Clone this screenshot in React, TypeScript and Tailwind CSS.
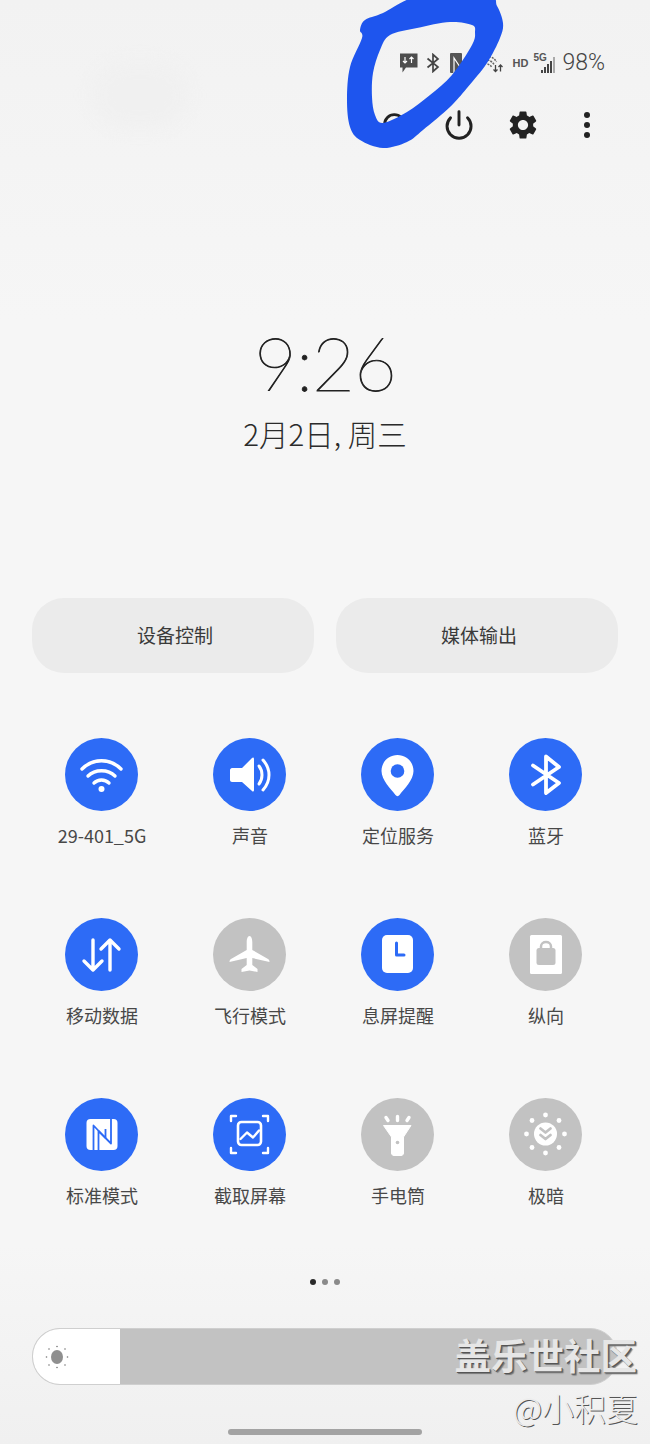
import React from "react";
import { Search, Power } from "lucide-react";
import { MdSettings } from "react-icons/md";

const BLUE = "#2d6bf6";
const GREY = "#c2c2c2";

function Glyph({ name, c }: { name: string; c: string }) {
  const s = { fill: "none", stroke: "#fff", strokeLinecap: "round" as const, strokeLinejoin: "round" as const };
  switch (name) {
    case "wifi":
      return (
        <g {...s} strokeWidth={3.4}>
          <path d="M17 31C28 20 45 20 56 31" />
          <path d="M23 38C30 31 43 31 50 38" />
          <path d="M29 45C33 41 40 41 44 45" />
          <circle cx={36.5} cy={51} r={3} fill="#fff" stroke="none" />
        </g>
      );
    case "sound":
      return (
        <g>
          <path d="M19 30H29L39 20C40 19 41 19.500 41 21V52C41 53.500 40 54 39 53L29 44H19C18 44 17 43 17 42V32C17 31 18 30 19 30Z" fill="#fff" />
          <path d="M46 28C50 33 50 41 46 46" {...s} strokeWidth={3} />
          <path d="M50 22C58 31 58 43 50 52" {...s} strokeWidth={3} />
        </g>
      );
    case "pin":
      return (
        <g>
          <path d="M36.500 17C45.500 17 52.500 24 52.500 33C52.500 42 43 51 38.500 57C37.500 58.500 35.500 58.500 34.500 57C30 51 20.500 42 20.500 33C20.500 24 27.500 17 36.500 17Z" fill="#fff" />
          <circle cx={36.500} cy={33} r={6.800} fill={c} />
        </g>
      );
    case "bt":
      return <path d="M24 27.500L50 45L37 55V18.500L50 29L24 46.500" {...s} strokeWidth={3.800} />;
    case "data":
      return (
        <g {...s} strokeWidth={3.400}>
          <path d="M28 22V52M19 43L28 52L37 43" />
          <path d="M45 52V22M36 31L45 22L54 31" />
        </g>
      );
    case "plane":
      return (
        <path
          d="M36.500 18C38.300 18 39.300 21 39.300 24V32L55 41C56 41.600 56.500 42.500 56.500 44L39.300 40V47L44.500 51V54L36.500 52.500L28.500 54V51L33.700 47V40L16.500 44C16.500 42.500 17 41.600 18 41L33.700 32V24C33.700 21 34.700 18 36.500 18Z"
          fill="#fff"
        />
      );
    case "aod":
      return (
        <g>
          <rect x={21} y={17} width={31} height={38} rx={5} fill="#fff" />
          <path d="M35.500 25V37H43" fill="none" stroke={c} strokeWidth={3} strokeLinecap="round" strokeLinejoin="round" />
        </g>
      );
    case "lock":
      return (
        <g>
          <rect x={21} y={17} width={32} height={39} rx={1.500} fill="#fff" />
          <rect x={27.500} y={30} width={19} height={17} rx={2.500} fill={c} />
          <path d="M32 31V28.500C32 22.500 42 22.500 42 28.500V31" fill="none" stroke={c} strokeWidth={2.500} />
        </g>
      );
    case "nfc":
      return (
        <g>
          <rect x={21.500} y={21} width={31} height={31} rx={4} fill="#fff" />
          <path d="M28.500 52V27.500L40.500 40V31" fill="none" stroke={c} strokeWidth={1.800} strokeLinejoin="round" />
          <path d="M46 21V45.500L33.500 33V52" fill="none" stroke={c} strokeWidth={1.800} strokeLinejoin="round" />
        </g>
      );
    case "shot":
      return (
        <g {...s} strokeWidth={2.400}>
          <path d="M18 23V18H23M50 18H55V23M18 50V55H23M50 55H55V50" />
          <rect x={25} y={24} width={23} height={23} rx={3.500} strokeWidth={2.600} />
          <path d="M27.500 41L34 34.500L40 39.500L46 32.500" />
        </g>
      );
    case "torch":
      return (
        <g>
          <path d="M22.500 27.500H50L42.500 39V55C42.500 56.500 41.500 57.500 40 57.500H33C31.500 57.500 30.500 56.500 30.500 55V39Z" fill="#fff" stroke="#fff" strokeLinejoin="round" strokeWidth={1} />
          <circle cx={36.500} cy={44.500} r={1.800} fill={c} />
          <path d="M25 19.500L27 22.500M36.500 18.500V22.500M48 19.500L46 22.500" {...s} strokeWidth={3.400} />
        </g>
      );
    case "dim":
      return (
        <g>
          <circle cx={36.500} cy={36} r={11.500} fill="#fff" />
          <path d="M31.500 30.500L36.500 34.500L41.500 30.500M31.500 37L36.500 41L41.500 37" fill="none" stroke={c} strokeWidth={2.800} strokeLinecap="round" strokeLinejoin="round" />
          {[[36.500, 17], [36.500, 55], [17.500, 36], [55.500, 36], [23, 22.500], [50, 22.500], [23, 49.500], [50, 49.500]].map(([x, y], i) => (
            <circle key={i} cx={x} cy={y} r={2.400} fill="#fff" />
          ))}
        </g>
      );
    default:
      return null;
  }
}

const tiles: { label: string; icon: string; on: boolean }[] = [
  { label: "29-401_5G", icon: "wifi", on: true },
  { label: "声音", icon: "sound", on: true },
  { label: "定位服务", icon: "pin", on: true },
  { label: "蓝牙", icon: "bt", on: true },
  { label: "移动数据", icon: "data", on: true },
  { label: "飞行模式", icon: "plane", on: false },
  { label: "息屏提醒", icon: "aod", on: true },
  { label: "纵向", icon: "lock", on: false },
  { label: "标准模式", icon: "nfc", on: true },
  { label: "截取屏幕", icon: "shot", on: true },
  { label: "手电筒", icon: "torch", on: false },
  { label: "极暗", icon: "dim", on: false },
];

function Tile({ label, icon, on }: { label: string; icon: string; on: boolean }) {
  const c = on ? BLUE : GREY;
  return (
    <div className="flex h-[180px] flex-col items-center">
      <svg width={73} height={73} viewBox="0 0 73 73" className="block shrink-0">
        <circle cx={36.500} cy={36.500} r={36.500} fill={c} />
        <Glyph name={icon} c={c} />
      </svg>
      <div className="mt-[11px] pl-[2px] text-[18px] leading-[26px] text-[#484848] whitespace-nowrap">{label}</div>
    </div>
  );
}

function StatusBar() {
  return (
    <div className="mt-[50px] flex h-[26px] shrink-0 items-center justify-end pr-[45px] text-[#555]">
      <svg width={19} height={20} viewBox="0 0 19 20" className="mr-[8px] block">
        <path d="M1 0.500H18.500V14.500H7L3.500 19.500V14.500H1Z" fill="#4d4d4d" />
        <path d="M6 4V10M4 8L6 10L8 8M12.500 10V4M10.500 6L12.500 4L14.500 6" fill="none" stroke="#fff" strokeWidth={1.200} />
      </svg>
      <svg width={14} height={20} viewBox="0 0 14 20" className="mr-[10px] block">
        <path d="M1.500 5.500L12 14L7 18.500V1.500L12 6L1.500 14.500" fill="none" stroke="#444" strokeWidth={1.700} />
      </svg>
      <svg width={12} height={20} viewBox="0 0 12 20" className="mr-[24px] block">
        <rect width={12} height={20} rx={1} fill="#555" />
        <path d="M4 20V5L10 14" fill="none" stroke="#fff" strokeWidth={1.200} />
      </svg>
      <svg width={17} height={19} viewBox="0 0 17 19" className="mr-[10px] block">
        <path d="M3 2.500C6 3 9 5 10.500 8M1.500 6C4 6.500 6.500 8 8 10.500M1.500 10C3 10.500 5 11.500 6 13.500" fill="none" stroke="#666" strokeWidth={1.500} strokeDasharray="2 1" />
        <path d="M9.500 11V17.500M7.500 15.500L9.500 17.500L11.500 15.500M14.500 17.500V11M12.500 13L14.500 11L16.500 13" fill="none" stroke="#444" strokeWidth={1.300} />
      </svg>
      <span className="mr-[5px] text-[11px] leading-none font-bold [font-family:'Liberation_Sans',sans-serif]">HD</span>
      <div className="relative mr-[7px] h-[20px] w-[22px]">
        <span className="absolute top-[0px] left-0 text-[10px] leading-[10px] font-bold [font-family:'Liberation_Sans',sans-serif]">5G</span>
        <div className="absolute right-0 bottom-0 flex items-end gap-[1px]">
          <div className="h-[3px] w-[2px] bg-[#444]" />
          <div className="h-[6px] w-[2px] bg-[#444]" />
          <div className="h-[9px] w-[2px] bg-[#444]" />
          <div className="h-[12px] w-[2px] bg-[#444]" />
          <div className="h-[16px] w-[2px] bg-[#aaa]" />
        </div>
      </div>
      <span className="text-[23px] leading-[26px] font-light text-[#444] [font-family:Roboto,sans-serif]">98%</span>
    </div>
  );
}

/* closed smooth curve through hand-read points of the pen mark */
function smooth(p: number[][]) {
  const n = p.length;
  let d = `M${p[0][0]} ${p[0][1]}`;
  for (let i = 0; i < n; i++) {
    const a = p[(i - 1 + n) % n];
    const b = p[i];
    const e = p[(i + 1) % n];
    const f = p[(i + 2) % n];
    d += `C${b[0] + (e[0] - a[0]) / 6} ${b[1] + (e[1] - a[1]) / 6} ${e[0] - (f[0] - b[0]) / 6} ${e[1] - (f[1] - b[1]) / 6} ${e[0]} ${e[1]}`;
  }
  return d + "Z";
}

const outer = [
  [360, 30], [362, 38], [350, 67], [347, 100], [350, 127], [360, 140], [383, 148], [407, 142], [423, 130],
  [450, 107], [467, 88], [487, 63], [500, 38], [503, 23], [497, 6], [487, -4], [420, -4], [383, 13], [365, 20],
];
const inner = [
  [390, 35], [417, 28], [450, 22], [472, 25], [475, 32], [472, 45], [452, 75], [430, 95], [407, 112],
  [383, 123], [375, 115], [372, 97], [373, 73], [380, 50],
];

export default function App() {
  return (
    <div className="relative h-[1444px] w-[650px] overflow-hidden bg-[#f6f6f6] [font-family:'Noto_Sans_CJK_SC','Noto_Sans',sans-serif]">
      {/* faint wallpaper */}
      <div className="absolute top-0 left-0 h-[320px] w-full bg-gradient-to-b from-[#f2f2f2] to-transparent" />
      <div className="absolute top-[62px] left-[92px] h-[66px] w-[96px] rounded-full bg-[#f0f0f0] blur-[8px]" />
      <div className="absolute bottom-0 left-0 h-[200px] w-full bg-gradient-to-b from-transparent to-[#f0f0f0]" />

      <div className="relative flex h-full flex-col">
        <StatusBar />

        <div className="mt-[29px] flex h-[40px] shrink-0 justify-end pr-[31px] text-[#222]">
          <div className="flex w-16 items-center justify-center">
            <Search size={29} strokeWidth={2.400} />
          </div>
          <div className="flex w-16 items-center justify-center">
            <Power size={32} strokeWidth={2.200} />
          </div>
          <div className="flex w-16 items-center justify-center">
            <MdSettings size={34} />
          </div>
          <div className="flex w-16 flex-col items-center justify-center gap-[4px]">
            <div className="h-[6px] w-[6px] rounded-full bg-[#222]" />
            <div className="h-[6px] w-[6px] rounded-full bg-[#222]" />
            <div className="h-[6px] w-[6px] rounded-full bg-[#222]" />
          </div>
        </div>

        <div className="mt-[181px] text-center text-[74px] leading-[74px] font-thin tracking-[-1px] text-[#222] [-webkit-text-stroke:0.8px_#222] [font-family:Lato,sans-serif]">9:26</div>
        <div className="mt-[13px] text-center text-[29.5px] leading-[40px] text-[#2b2b2b] font-light">2月2日, 周三</div>

        <div className="mt-[145px] flex gap-[22px] px-[32px]">
          <div className="flex h-[75px] flex-1 items-center justify-center rounded-[32px] bg-[#ebebeb] pl-[4px] text-[19px] text-[#3a3a3a]">设备控制</div>
          <div className="flex h-[75px] flex-1 items-center justify-center rounded-[32px] bg-[#ebebeb] pl-[4px] text-[19px] text-[#3a3a3a]">媒体输出</div>
        </div>

        <div className="mt-[65px] grid grid-cols-[repeat(4,148px)] px-[27px]">
          {tiles.map((t) => (
            <Tile key={t.label} {...t} />
          ))}
        </div>

        <div className="mt-[1px] flex items-center justify-center gap-[6px]">
          <div className="h-[6px] w-[6px] rounded-full bg-[#2a2a2a]" />
          <div className="h-[6px] w-[6px] rounded-full bg-[#8a8a8a]" />
          <div className="h-[6px] w-[6px] rounded-full bg-[#8a8a8a]" />
        </div>

        <div className="mx-[32px] mt-[43px] flex h-[57px] shrink-0 overflow-hidden rounded-[28px] border border-[#cfcfcf] bg-[#c2c2c2]">
          <div className="flex w-[87px] items-center bg-white pl-[12px]">
            <svg width={24} height={24} viewBox="0 0 24 24" className="block">
              <ellipse cx={12} cy={12} rx={6} ry={7} fill="#8f8f8f" />
              <g fill="#777">
                {[[12, 1.500], [12, 22.500], [1.500, 12], [22.500, 12], [4, 4], [20, 4], [4, 20], [20, 20]].map(([x, y], i) => (
                  <circle key={i} cx={x} cy={y} r={0.800} />
                ))}
              </g>
            </svg>
          </div>
        </div>

        <div className="mx-auto mt-[44px] h-[6px] w-[194px] shrink-0 rounded-full bg-[#a3a3a3]" />
      </div>

      {/* watermark */}
      <div className="absolute top-[1332px] right-[13px] text-[36.5px] leading-[46px] font-bold text-[#e6e6e6] [text-shadow:1px_1px_0_#555,2px_2px_1px_#777]">盖乐世社区</div>
      <div className="absolute top-[1385px] right-[12px] text-[32px] leading-[44px] font-light text-[#ececec] [text-shadow:1px_1px_0_#555]">@小积夏</div>

      {/* hand-drawn pen mark */}
      <svg width={650} height={170} viewBox="0 0 650 170" className="pointer-events-none absolute top-0 left-0 block">
        <path d={smooth(outer) + smooth(inner)} fill="#1e55ee" fillRule="evenodd" />
      </svg>
    </div>
  );
}
